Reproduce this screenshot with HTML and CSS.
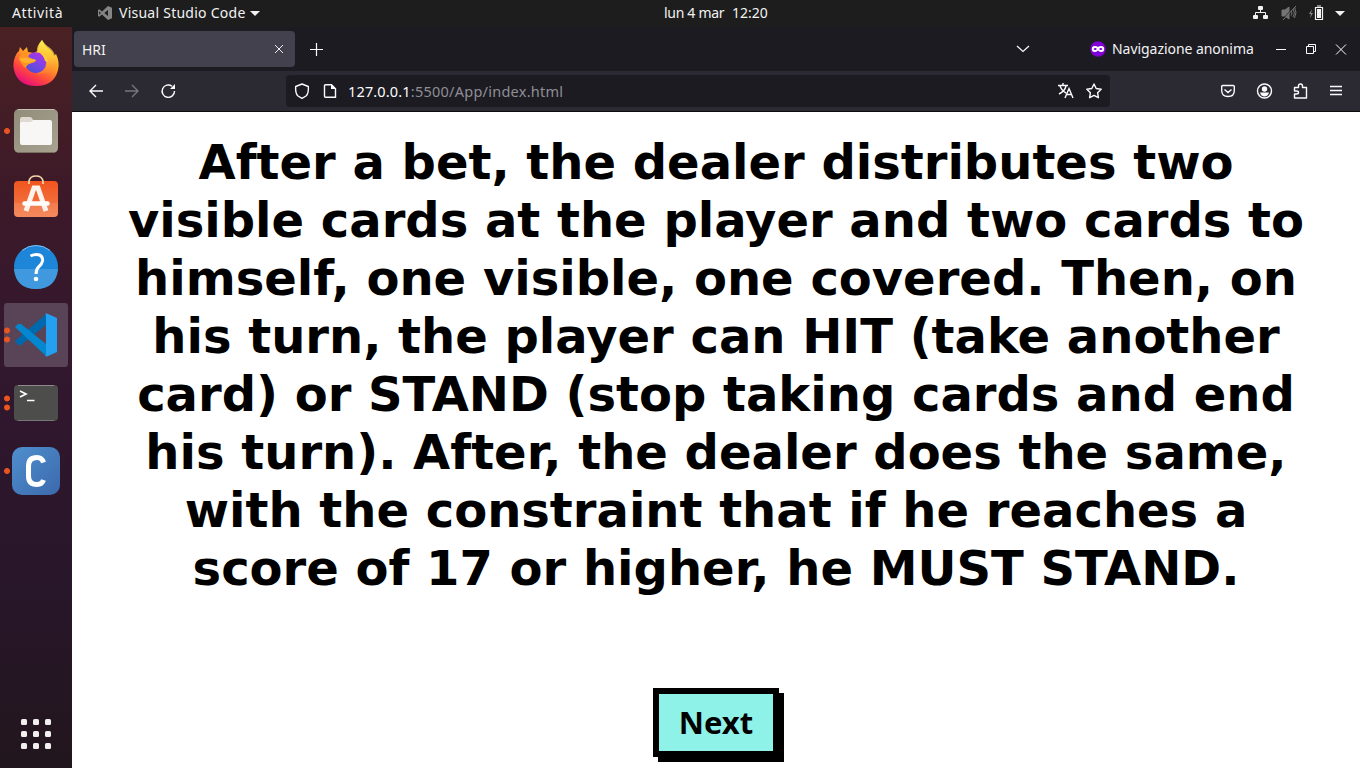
FILE: index.html
```html
<!DOCTYPE html>
<html lang="it">
<head>
<meta charset="utf-8">
<title>HRI</title>
<link rel="stylesheet" href="styles.css">
</head>
<body>
<header class="topbar">
  <span class="activities">Attività</span>
  <svg class="app-icon" width="14" height="14" viewBox="0 0 14 14"><path d="M10 0l4 1.700v10.600L10 14 4 8.600 1.300 10.700 0 10V4l1.300-.7L4 5.400zM10 4L6.300 7 10 10zM1.200 5.300v3.400L2.900 7z" fill="#858585" fill-rule="evenodd"/></svg>
  <span class="app-name">Visual Studio Code</span>
  <svg class="caret" width="10" height="5"><path d="M0 0h10L5 5z" fill="#f2f2f2"/></svg>
  <div class="clock"><span class="date">lun 4 mar</span><span class="time">12:20</span></div>
  <svg class="system" width="96" height="18" viewBox="0 0 96 18">
    <g fill="#f2f2f2"><rect x="6" y="2" width="5" height="4" rx="1"/><rect x="1" y="11" width="5" height="4" rx="1"/><rect x="11" y="11" width="5" height="4" rx="1"/></g>
    <path d="M8.500 5v3.500M3.500 12V8.500h10V12" fill="none" stroke="#f2f2f2"/>
    <g stroke="#747474" fill="none"><path d="M30 6h3l4-3v12l-4-3h-3z" fill="#747474"/><path d="M39 6.500q2 2.500 0 5M41 5q3 4 0 8M42.500 3q3 6 0 11"/><path d="M30 16L43 2" stroke="#1d1d1d"/><path d="M31 16L44 2"/></g>
    <path d="M60 5l-3 5h2l-1 4 3-5h-2z" fill="#888"/>
    <path d="M63.500 3.500h7v12h-7zM65 2h4" fill="none" stroke="#f2f2f2" stroke-width="1.200"/><path d="M65 5h4v9h-4z" fill="#f2f2f2"/>
    <path d="M83 7h10l-5 5z" fill="#f2f2f2"/>
  </svg>
</header>
<div class="desktop">
  <nav class="dock">
    <div class="item">
      <svg width="48" height="48" viewBox="0 0 48 48">
        <defs>
          <linearGradient id="fox" x1=".8" y1=".1" x2=".3" y2="1"><stop offset="0" stop-color="#ffe23c"/><stop offset=".4" stop-color="#ff9a25"/><stop offset=".72" stop-color="#ff453f"/><stop offset="1" stop-color="#e50b80"/></linearGradient>
          <linearGradient id="globe" x1=".8" y1="0" x2=".2" y2="1"><stop offset="0" stop-color="#b530e4"/><stop offset=".5" stop-color="#7a45e8"/><stop offset="1" stop-color="#494fcf"/></linearGradient>
          <linearGradient id="tail" x1="0" y1="0" x2="0" y2="1"><stop offset="0" stop-color="#fff352"/><stop offset=".5" stop-color="#ffc638"/><stop offset="1" stop-color="#ff7a30"/></linearGradient>
        </defs>
        <path d="M30 1q2 5 7 9 4 3 5 7l2-2q4 8 2 16-4 16-22 16Q6 47 2 31 0 22 5 14l2-2 1-4 3 4 4-4 1 5 6 1q3-2 4-2 0-6 4-11z" fill="url(#fox)"/>
        <path d="M30 1q-6 6-5 12 9 2 10 11-1 8-10 11 12 1 19-8 1-7-1-10-1-5-5-8-6-4-8-8z" fill="url(#tail)" opacity=".75"/>
        <circle cx="23.700" cy="23.700" r="10.500" fill="url(#globe)"/>
        <path d="M28 14q5 1 7 6l2 3-4-1q-1-5-5-8z" fill="#ffd03a"/>
        <path d="M7 18l5-5q3-1 6 1-2 2-1.500 4l3.500 2 4 1q0 2-4 3-5 1-6.500 5Q8 25 7 18z" fill="#ff9422"/>
        <path d="M7 20q5-2 9-1l5 1 3 1q0 1-4 2-8 3-13-3z" fill="#ffb02e"/>
      </svg>
    </div>
    <div class="item one">
      <svg width="48" height="48" viewBox="0 0 48 48"><defs><linearGradient id="box" x1="0" y1="0" x2="1" y2="1"><stop offset="0" stop-color="#918b79"/><stop offset="1" stop-color="#a8a291"/></linearGradient></defs><rect x="2" y="2" width="44" height="44" rx="5" fill="url(#box)"/><path d="M6 2.500h36" stroke="#c6c1b5"/><path d="M6 45.500h36" stroke="#777060"/><path d="M8 14V12q0-2 2-2h8q2 0 3 3h2v8H8z" fill="#dedad1"/><path d="M8 17q0-2 2-2h8q2 0 3-2h17q2 0 2 2v21q0 2-2 2H10q-2 0-2-2z" fill="#f8f7f5"/></svg>
    </div>
    <div class="item">
      <svg width="48" height="48" viewBox="0 0 48 48"><defs><linearGradient id="bag" x1="0" y1="0" x2="0" y2="1"><stop offset="0" stop-color="#f1551f"/><stop offset="1" stop-color="#f37d4c"/></linearGradient></defs><rect x="2" y="6" width="44" height="36" rx="4" fill="url(#bag)"/><path d="M2 28h44v10q0 4-4 4H6q-4 0-4-4z" fill="#fff" opacity=".1"/><path d="M17 9V6q1-5 7-5t7 5v3" fill="none" stroke="#f4d6a9" stroke-width="1.700"/><path d="M14 36L22 13h4L34 36" fill="none" stroke="#fff1eb" stroke-width="5"/><path d="M12.500 28.500h23" stroke="#fff" stroke-width="4.500" stroke-linecap="round"/></svg>
    </div>
    <div class="item">
      <svg width="48" height="48" viewBox="0 0 48 48"><circle cx="24" cy="24" r="22" fill="#1e86d8"/><path d="M2 26h44Q44 46 24 46T2 26z" fill="#4099df"/><path d="M10 7.500Q16 2.500 24 2.500T38 7.500" fill="none" stroke="#7fbced"/><path d="M18.500 13q5-2.500 9-1 3.500 1.500 3 6-.5 3-3.500 5.500T24 31" fill="none" stroke="#fff" stroke-width="3"/><circle cx="24" cy="36" r="2.300" fill="#fff"/></svg>
    </div>
    <div class="item two active">
      <svg width="48" height="48" viewBox="0 0 48 48"><path d="M3 30L6 34h3L34 14V3z" fill="#0069ad"/><path d="M3 16l3-3h3L34 33v12z" fill="#0388cf"/><path d="M33 3l2-.5 10 4.500v34l-10 4.500-2-.5 1-1V4z" fill="#259ff0"/></svg>
    </div>
    <div class="item two">
      <svg width="48" height="48" viewBox="0 0 48 48"><rect x="2" y="6" width="44" height="36" rx="4" fill="#4d4d4b"/><path d="M6 6.500h36" stroke="#8b8b89"/><path d="M6 41.500h36" stroke="#777"/><path d="M8 12l6 3-6 3M15 21.500h7.500" fill="none" stroke="#fff" stroke-width="1.700"/></svg>
    </div>
    <div class="item one">
      <svg width="48" height="48" viewBox="0 0 48 48"><defs><linearGradient id="blue" x1="0" y1="0" x2="1" y2="1"><stop offset="0" stop-color="#4f8fcf"/><stop offset="1" stop-color="#3b69ac"/></linearGradient></defs><rect width="48" height="48" rx="10" fill="url(#blue)"/><path d="M31.500 15.500q-1.500-5-6.500-5-8.500 0-8.500 8.500v10q0 8.500 8.500 8.500 5 0 6.500-4.500" fill="none" stroke="#fff" stroke-width="5"/></svg>
    </div>
    <div class="apps"><i></i><i></i><i></i><i></i><i></i><i></i><i></i><i></i><i></i></div>
  </nav>
  <main class="window">
    <div class="tabs">
      <div class="tab"><span>HRI</span><svg width="10" height="10"><path d="M1 1l8 8M9 1L1 9" stroke="#eee"/></svg></div>
      <svg class="new-tab" width="13" height="13"><path d="M6.500 0v13M0 6.500h13" stroke="#fbfbfe" stroke-width="1.200"/></svg>
      <svg class="all-tabs" width="14" height="8"><path d="M1 1l6 5.500L13 1" fill="none" stroke="#fbfbfe" stroke-width="1.200"/></svg>
      <svg class="mask" width="16" height="16"><circle cx="8" cy="8" r="7.700" fill="#8000d7"/><path d="M1.800 8q0-3 3-3Q7 5 8 6q1-1 3.200-1 3 0 3 3 0 3-2.700 3Q9.500 11 8 9.500 6.500 11 4.500 11 1.800 11 1.800 8z" fill="#fff"/><ellipse cx="5.200" cy="8" rx="1.500" ry="1" fill="#8000d7"/><ellipse cx="10.800" cy="8" rx="1.500" ry="1" fill="#8000d7"/></svg>
      <span class="private">Navigazione anonima</span>
      <svg class="controls" width="70" height="12" fill="none" stroke="#fbfbfe"><path d="M0 6.500h10M30.500 3.500h7v7h-7zM32.500 3V1.500h7v7H38M60 1.500l10 10M70 1.500l-10 10"/></svg>
    </div>
    <div class="toolbar">
      <svg class="nav" width="90" height="16" fill="none" stroke="#fbfbfe" stroke-width="1.400"><path d="M15 8H2M8 2L2 8l6 6"/><path d="M37 8h13M44 2l6 6-6 6" stroke="#77767e"/><path d="M86.500 8A6.200 6.200 0 1 1 84 3.200"/><path d="M87 1v5h-5z" fill="#fbfbfe" stroke="none"/></svg>
      <div class="url">
        <svg width="46" height="16" fill="none" stroke="#fbfbfe" stroke-width="1.400"><path d="M8 1l6.300 2.500q.5 7-2.300 9.500l-4 2.400L4 13Q1.200 10.500 1.700 3.500z" stroke-linejoin="round"/><path d="M31.500 1.700h6L41.500 5.700v8.500H31.500q-1 0-1-1V2.700q0-1 1-1z"/><path d="M37 1v5h5z" fill="#fbfbfe" stroke="none"/></svg>
        <span class="address"><b>127.0.0.1</b>:5500/App/index.html</span>
        <svg class="url-tools" width="46" height="18" fill="none" stroke="#fbfbfe" stroke-width="1.400"><path d="M1 3.500h10M6 1v2.500M3 4q2 5 6 7M9 4q-1 5-7 8M8 16l4-9.500L16 16M9.500 12.500h5"/><path d="M37 2l2.200 4.500 5 .7-3.600 3.500.8 5-4.400-2.400-4.400 2.400.8-5-3.600-3.500 5-.7z" stroke-linejoin="round"/></svg>
      </div>
      <svg class="tools" width="124" height="18" fill="none" stroke="#fbfbfe" stroke-width="1.400"><path d="M2.700 3.500h10.600q1 0 1 1v4q0 6-6.300 6t-6.300-6v-4q0-1 1-1zM4.500 7.500L8 10.500l3.500-3"/><circle cx="44.500" cy="9" r="7"/><g fill="#fbfbfe" stroke="none"><circle cx="44.500" cy="7" r="2.700"/><path d="M40 10.500h9q-1 4-4.500 4t-4.500-4z"/></g><path d="M74.500 5.500h4V4q0-2 2-2t2 2v1.500h4v10.500h-12v-4h2q2 0 2-1.500T76.500 9h-2z" stroke-linejoin="round"/><path d="M110 4.500h12M110 8.500h12M110 12.500h12"/></svg>
    </div>
    <section class="page">
      <h1>After a bet, the dealer distributes two<br>visible cards at the player and two cards to<br>himself, one visible, one covered. Then, on<br>his turn, the player can HIT (take another<br>card) or STAND (stop taking cards and end<br>his turn). After, the dealer does the same,<br>with the constraint that if he reaches a<br>score of 17 or higher, he MUST STAND.</h1>
      <button class="next">Next</button>
    </section>
  </main>
</div>
</body>
</html>
```
FILE: styles.css
```css
* { box-sizing: border-box; }
body { margin: 0; width: 1360px; height: 768px; overflow: hidden; display: flex; flex-direction: column; background: #1d1d1d; color: #f2f2f2; font: 14px/20px "Noto Sans", sans-serif; }
svg { flex: none; display: block; }
span { white-space: nowrap; }
.topbar { height: 27px; padding-bottom: 1px; display: flex; align-items: center; background: #1d1d1d; }
.activities { width: 86px; padding-left: 12px; margin-right: 12px; letter-spacing: .6px; }
.app-name { width: 131px; margin-left: 7px; letter-spacing: .25px; }
.clock { display: flex; margin-left: 404px; width: 105px; }
.date { width: 68px; letter-spacing: -.3px; }
.system { margin-left: 483px; }
.desktop { display: flex; flex: 1; min-height: 0; }
.dock { width: 72px; padding: 4px; display: flex; flex-direction: column; gap: 4px; background: linear-gradient(#4a2123, #3c1929 24%, #31172e 48%, #28162a 75%, #22161d); }
.item { width: 64px; height: 64px; flex: none; display: grid; place-items: center; border-radius: 3px; background-repeat: no-repeat; }
.active { background-color: #594457; }
.one { background-image: radial-gradient(circle at 3px 32px, #e95420 2.5px, transparent 3.4px); }
.two { background-image: radial-gradient(circle at 3px 27.500px, #e95420 2.5px, transparent 3.4px), radial-gradient(circle at 3px 36.500px, #e95420 2.5px, transparent 3.4px); }
.apps { display: grid; grid-template-columns: repeat(3, 6px); gap: 6px; margin: auto auto 15px 17px; }
.apps i { width: 6px; height: 6px; border-radius: 1.500px; background: #f2f0ee; }
.window { width: 1288px; display: flex; flex-direction: column; }
.tabs { height: 44px; display: flex; align-items: center; background: #1c1b22; padding-left: 2px; }
.tab { width: 221px; height: 36px; border-radius: 4px; background: #42414d; display: flex; align-items: center; justify-content: space-between; padding: 0 11px 0 8px; }
.tab span { padding-top: 2px; }
.new-tab { margin-left: 15px; }
.all-tabs { margin-left: 693px; }
.mask { margin-left: 60px; }
.private { width: 158px; margin-left: 6px; letter-spacing: -.05px; }
.controls { margin-left: 6px; overflow: visible; }
.toolbar { height: 41px; display: flex; align-items: center; background: #2b2a33; border-bottom: 1px solid #0c0c0d; }
.nav { margin-left: 16px; }
.url { width: 824px; height: 32px; margin-left: 108px; padding: 0 7px 0 8px; border-radius: 4px; background: #1c1b22; display: flex; align-items: center; }
.address { margin-left: 8px; color: #8f8e96; font-size: 14.500px; letter-spacing: .25px; }
.address b { color: #fbfbfe; font-weight: 400; letter-spacing: .15px; }
.url-tools { margin-left: auto; }
.tools { margin-left: 110px; }
.page { flex: 1; background: #fff; color: #000; display: flex; flex-direction: column; align-items: center; }
h1 { margin: 21px 0 0; font: bold 48px/58px "DejaVu Sans", sans-serif; text-align: center; white-space: nowrap; }
.next { width: 126px; height: 69px; margin-top: 91px; padding: 0 0 2px; border: 6px solid #000; border-radius: 0; background: #8ff2e8; color: #000; box-shadow: 5px 5px #000; font: bold 31px/40px "Noto Sans", sans-serif; }
```
